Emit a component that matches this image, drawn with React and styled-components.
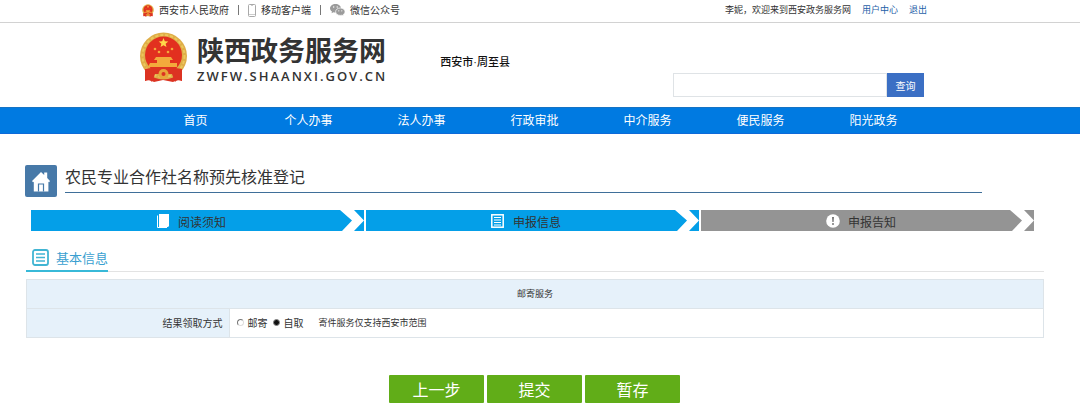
import React, { useState } from "react";
import styled, { createGlobalStyle } from "styled-components";

const navItems = ["首页", "个人办事", "法人办事", "行政审批", "中介服务", "便民服务", "阳光政务"];

const steps = [
  { label: "阅读须知", icon: PageIcon, done: true },
  { label: "申报信息", icon: FormIcon, done: true },
  { label: "申报告知", icon: NoticeIcon, done: false },
];

function App() {
  const [pickup, setPickup] = useState("self");

  return (
    <>
      <GlobalStyle />
      <TopBar>
        <Inner>
          <TopLinks>
            <TopLink href="#gov">
              <Emblem width="12" height="13" />
              西安市人民政府
            </TopLink>
            <Divider />
            <TopLink href="#app">
              <PhoneIcon />
              移动客户端
            </TopLink>
            <Divider />
            <TopLink href="#wechat">
              <WechatIcon />
              微信公众号
            </TopLink>
          </TopLinks>
          <UserLinks>
            <Greeting>李妮，欢迎来到西安政务服务网</Greeting>
            <UserLink href="#user">用户中心</UserLink>
            <UserLink href="#logout">退出</UserLink>
          </UserLinks>
        </Inner>
      </TopBar>

      <Header>
        <Inner>
          <Emblem width="49" height="52" />
          <Brand>
            <BrandName>陕西政务服务网</BrandName>
            <BrandUrl>ZWFW.SHAANXI.GOV.CN</BrandUrl>
          </Brand>
          <Region>西安市·周至县</Region>
          <Search onSubmit={(e) => e.preventDefault()}>
            <SearchInput type="text" aria-label="查询" />
            <SearchButton type="submit">查询</SearchButton>
          </Search>
        </Inner>
      </Header>

      <Nav>
        <Inner>
          {navItems.map((item) => (
            <NavLink href="#nav" key={item}>
              {item}
            </NavLink>
          ))}
        </Inner>
      </Nav>

      <Main>
        <TitleRow>
          <HomeBox>
            <HomeIcon />
          </HomeBox>
          <Title>农民专业合作社名称预先核准登记</Title>
        </TitleRow>

        <Steps>
          {steps.map(({ label, icon: Icon, done }) => (
            <Step key={label} $done={done}>
              <StepLabel>
                <Icon />
                <span>{label}</span>
              </StepLabel>
              <Chevron />
            </Step>
          ))}
        </Steps>

        <SectionHead>
          <SectionTitle>
            <ListIcon />
            基本信息
          </SectionTitle>
        </SectionHead>

        <Table>
          <colgroup>
            <LabelCol />
            <col />
          </colgroup>
          <thead>
            <tr>
              <HeadCell colSpan="2">邮寄服务</HeadCell>
            </tr>
          </thead>
          <tbody>
            <tr>
              <LabelCell scope="row">结果领取方式</LabelCell>
              <td>
                <Options>
                  <Option>
                    <Radio
                      name="pickup"
                      checked={pickup === "mail"}
                      onChange={() => setPickup("mail")}
                    />
                    邮寄
                  </Option>
                  <Option>
                    <Radio
                      name="pickup"
                      checked={pickup === "self"}
                      onChange={() => setPickup("self")}
                    />
                    自取
                  </Option>
                  <Hint>寄件服务仅支持西安市范围</Hint>
                </Options>
              </td>
            </tr>
          </tbody>
        </Table>

        <Actions>
          <ActionButton type="button">上一步</ActionButton>
          <ActionButton type="button">提交</ActionButton>
          <ActionButton type="button">暂存</ActionButton>
        </Actions>
      </Main>
    </>
  );
}

export default App;

function Emblem({ width, height }) {
  return (
    <svg width={width} height={height} viewBox="0 0 49 52" aria-hidden="true">
      <path d="M6 34L6 49Q11 47 15 50L24 48L34 50Q38 47 43 49L43 34Z" fill="#dc3322" />
      <circle cx="24.5" cy="24" r="23.5" fill="#dfae48" />
      <circle cx="24.5" cy="24" r="21" fill="none" stroke="#ecc75c" strokeWidth="2" strokeDasharray="3 2" />
      <circle cx="24.5" cy="23" r="18.5" fill="#e2301f" />
      <path d="M24.5 6l1.3 3.300 3.500.2-2.700 2.200.9 3.400-3-1.900-3 1.900.9-3.400-2.700-2.200 3.500-.2z" fill="#ffd84a" />
      <g fill="#f3a93c">
        <circle cx="16" cy="17" r="1.300" />
        <circle cx="20" cy="20" r="1.300" />
        <circle cx="29" cy="20" r="1.300" />
        <circle cx="33" cy="17" r="1.300" />
        <path d="M17 25h15l2 3H15zM18 28h13v3H18zM11 31h27v4H9z" />
      </g>
      <path d="M6 37Q24 33 43 37L43 49Q39 46 36 50L33 42H16L13 50Q10 46 6 49Z" fill="#dc3322" />
      <circle cx="24.5" cy="42" r="5" fill="#e8a63a" />
      <circle cx="24.5" cy="42" r="2" fill="#dc3322" />
    </svg>
  );
}

function PhoneIcon() {
  return (
    <svg width="8" height="13" viewBox="0 0 8 13" fill="none" stroke="#a9a9a9" aria-hidden="true">
      <rect x=".5" y=".5" width="7" height="12" rx="1" />
      <path d="M1 10.500h6M3 1.500h2" strokeWidth=".6" />
    </svg>
  );
}

function WechatIcon() {
  return (
    <svg width="15" height="12" viewBox="0 0 15 12" aria-hidden="true">
      <path d="M5.500 0C2.500 0 0 2 0 4.300c0 1.300.8 2.500 2 3.300L1.500 9.300l2-1c.6.200 1.300.3 2 .3 3 0 5.500-1.900 5.500-4.300S8.500 0 5.500 0z" fill="#9b9b9b" />
      <path d="M10.300 4C7.700 4 5.600 5.600 5.600 7.700s2.100 3.700 4.700 3.700c.6 0 1.100-.1 1.600-.2l1.700.8-.4-1.400c1.100-.7 1.800-1.700 1.800-2.900C15 5.600 12.900 4 10.300 4z" fill="#9b9b9b" stroke="#fff" strokeWidth=".7" />
      <g fill="#fff">
        <circle cx="3.700" cy="3" r=".7" />
        <circle cx="7.200" cy="3" r=".7" />
        <circle cx="8.800" cy="6.800" r=".6" />
        <circle cx="11.800" cy="6.800" r=".6" />
      </g>
    </svg>
  );
}

function HomeIcon() {
  return (
    <svg width="20" height="21" viewBox="0 0 20 21" aria-hidden="true">
      <path d="M10 1L1 10l1 1.300.8-.6V20.500h14.600V10.700l.8.600L19 10l-2.800-3V1.500h-3v2.600z" fill="#fff" />
      <path d="M7.500 20.500V13h5v7.500" fill="none" stroke="#4779a8" strokeWidth="1.200" />
    </svg>
  );
}

function PageIcon() {
  return (
    <svg width="14" height="14" viewBox="0 0 14 14" aria-hidden="true">
      <path d="M3 0h10v12l-1 1H3z" fill="#fff" />
      <path d="M1.500 1.500v12H11" fill="none" stroke="#fff" />
    </svg>
  );
}

function FormIcon() {
  return (
    <svg width="14" height="14" viewBox="0 0 14 14" aria-hidden="true">
      <rect x=".8" y=".8" width="11.400" height="12.400" fill="none" stroke="#fff" strokeWidth="1.500" />
      <path d="M3 3.500h7M3 6h7M3 8.500h7M3 11h7" stroke="#fff" />
    </svg>
  );
}

function NoticeIcon() {
  return (
    <svg width="14" height="14" viewBox="0 0 14 14" aria-hidden="true">
      <circle cx="7" cy="7" r="6.800" fill="#fff" />
      <path d="M6 3h2l-.4 5H6.400z" fill="#777" />
      <circle cx="7" cy="10" r="1" fill="#777" />
    </svg>
  );
}

function ListIcon() {
  return (
    <svg width="17" height="17" viewBox="0 0 17 17" fill="none" stroke="#41b5d3" aria-hidden="true">
      <rect x="1" y="1" width="15" height="15" rx="2" strokeWidth="1.800" />
      <path d="M4 5h9M4 8.500h9M4 12h9" strokeWidth="1.300" />
    </svg>
  );
}

function Chevron() {
  return (
    <svg width="24" height="21" viewBox="0 0 24 21" aria-hidden="true">
      <path d="M0 0h14l10 10.500L14 21H2l10-10.500z" fill="#fff" />
    </svg>
  );
}

const GlobalStyle = createGlobalStyle`
  * {
    box-sizing: border-box;
  }
  body {
    margin: 0;
    background: #fff;
    color: #333;
    font-family: "Noto Sans CJK SC", sans-serif;
    font-size: 10px;
  }
  a {
    text-decoration: none;
  }
  svg {
    display: block;
    flex: none;
  }
  input, button {
    font-family: inherit;
  }
`;

const Inner = styled.div`
  display: flex;
  width: 100%;
  max-width: 791px;
  margin: 0 auto;
`;
const Band = styled.div`
  display: flex;
  padding-right: 11px;
`;
const TopBar = styled(Band)`
  height: 23px;
  border-bottom: 1px solid #d2d2d2;
  line-height: 20px;
`;
const TopLinks = styled.div`
  display: flex;
  align-items: center;
  gap: 9px;
  padding-left: 3px;
  height: 20px;
`;
const TopLink = styled.a`
  display: flex;
  align-items: center;
  gap: 5px;
  color: #333;
`;
const Divider = styled.span`
  width: 1px;
  height: 10px;
  background: #777;
`;
const UserLinks = styled.div`
  display: flex;
  gap: 11px;
  margin-left: auto;
  padding-right: 3px;
  font-size: 9px;
`;
const Greeting = styled.span`
  color: #333;
`;
const UserLink = styled.a`
  color: #1f5fa8;
`;
const Header = styled(Band)`
  height: 84px;
  padding-top: 9px;
`;
const Brand = styled.div`
  padding-left: 9px;
`;
const BrandName = styled.div`
  font-size: 27px;
  font-weight: 700;
  line-height: 36px;
`;
const BrandUrl = styled.div`
  font-family: "Open Sans", sans-serif;
  font-size: 13px;
  font-weight: 600;
  letter-spacing: 2px;
  line-height: 16px;
`;
const Region = styled.div`
  padding: 20px 0 0 53px;
  color: #111;
  font-family: "Liberation Serif", "Noto Sans CJK SC", serif;
  font-size: 11px;
  font-weight: 500;
  line-height: 20px;
`;
const Search = styled.form`
  display: flex;
  align-self: flex-start;
  margin: 41px 6px 0 auto;
`;
const SearchInput = styled.input`
  width: 214px;
  height: 24px;
  border: 1px solid #dfe3e6;
  background: #fff;
`;
const SearchButton = styled.button`
  width: 37px;
  height: 24px;
  padding: 0;
  border: 0;
  background: #3b6fc4;
  color: #fff;
  font-size: 10px;
`;
const Nav = styled(Band)`
  height: 27px;
  border-top: 1px solid #1673c4;
  border-bottom: 1px solid #0d6ad9;
  background: #007ae1;
`;
const NavLink = styled.a`
  flex: 1;
  color: #fff;
  font-size: 12px;
  line-height: 24px;
  text-align: center;
`;
const Main = styled.main`
  padding: 31px 36px 0 25px;
`;
const TitleRow = styled.div`
  display: flex;
  gap: 8px;
  padding-right: 62px;
`;
const HomeBox = styled.div`
  display: flex;
  align-items: center;
  justify-content: center;
  width: 32px;
  height: 32px;
  border-radius: 2px;
  background: #4779a8;
`;
const Title = styled.h1`
  flex: 1;
  height: 28px;
  margin: 0;
  border-bottom: 1px solid #3f6f99;
  font-size: 16px;
  font-weight: 400;
  line-height: 22px;
`;
const Steps = styled.div`
  display: flex;
  gap: 2px;
  padding: 13px 10px 0 6px;
`;
const Step = styled.div`
  display: flex;
  flex: 1;
  height: 21px;
  background: ${(props) => (props.$done ? "#049fe8" : "#949494")};
`;
const StepLabel = styled.div`
  display: flex;
  flex: 1;
  align-items: center;
  justify-content: center;
  gap: 8px;
  padding-left: 11px;
  font-size: 12px;
  line-height: 12px;
  span {
    padding-top: 3px;
  }
`;
const SectionHead = styled.div`
  display: flex;
  margin: 13px 0 7px 1px;
  border-bottom: 1px solid #e3e3e3;
`;
const SectionTitle = styled.h2`
  display: flex;
  align-items: center;
  gap: 7px;
  height: 28px;
  margin: 0 0 -1px;
  padding-left: 6px;
  border-bottom: 2px solid #38b9d8;
  color: #3a9fd0;
  font-size: 13px;
  font-weight: 400;
`;
const Table = styled.table`
  width: calc(100% - 1px);
  margin-left: 1px;
  border-collapse: collapse;
  table-layout: fixed;
  th, td {
    height: 29px;
    padding: 0 7px 2px;
    border: 1px solid #dde4e9;
    font-weight: 400;
  }
`;
const LabelCol = styled.col`
  width: 20%;
`;
const HeadCell = styled.th`
  background: #e6f1fa;
  font-size: 9px;
`;
const LabelCell = styled.th`
  background: #e6f1fa;
  text-align: right;
`;
const Options = styled.div`
  display: flex;
  align-items: center;
  gap: 6px;
`;
const Option = styled.label`
  display: flex;
  align-items: center;
  gap: 3px;
`;
const Radio = styled.input.attrs({ type: "radio" })`
  appearance: none;
  width: 7px;
  height: 7px;
  margin: 0;
  border: 1px solid #777;
  border-right-color: #ddd;
  border-bottom-color: #ddd;
  border-radius: 50%;
  background: #fff;
  &:checked {
    border-color: #888;
    background: #111;
  }
`;
const Hint = styled.span`
  padding-left: 9px;
  font-size: 9px;
`;
const Actions = styled.div`
  display: flex;
  justify-content: center;
  gap: 3px;
  padding-top: 37px;
`;
const ActionButton = styled.button`
  width: 95px;
  height: 28px;
  padding: 0;
  border: 0;
  border-radius: 1px;
  background: #61ad18;
  color: #fff;
  font-size: 16px;
  line-height: 28px;
`;
